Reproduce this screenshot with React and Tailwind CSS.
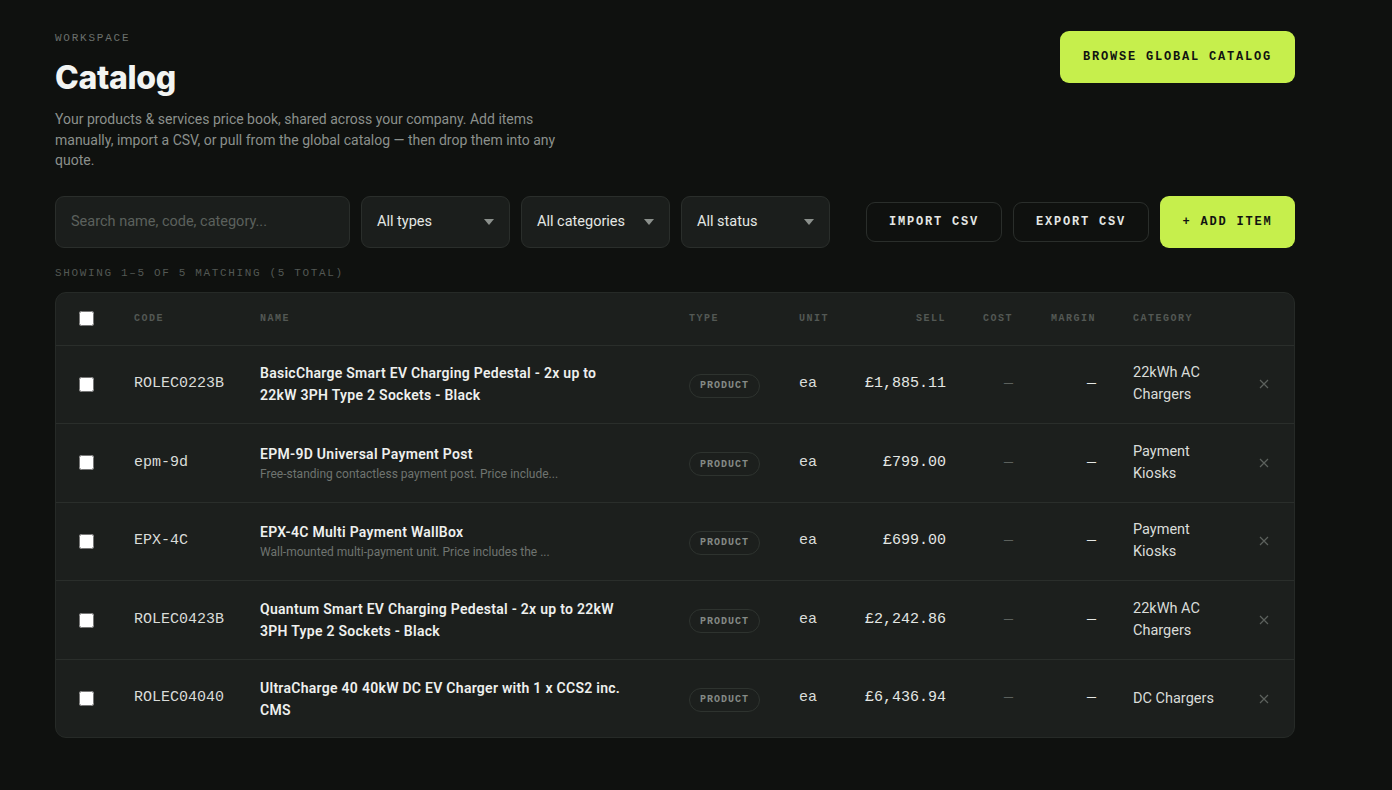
import { useState } from 'react';

const SANS = "font-['Roboto','Noto_Sans',sans-serif]";
const MONO = "font-['Liberation_Mono','DejaVu_Sans_Mono',monospace]";

const items = [
  {
    code: 'ROLEC0223B',
    name: 'BasicCharge Smart EV Charging Pedestal - 2x up to 22kW 3PH Type 2 Sockets - Black',
    sell: '£1,885.11',
    category: '22kWh AC Chargers',
  },
  {
    code: 'epm-9d',
    name: 'EPM-9D Universal Payment Post',
    desc: 'Free-standing contactless payment post. Price include...',
    sell: '£799.00',
    category: 'Payment Kiosks',
  },
  {
    code: 'EPX-4C',
    name: 'EPX-4C Multi Payment WallBox',
    desc: 'Wall-mounted multi-payment unit. Price includes the ...',
    sell: '£699.00',
    category: 'Payment Kiosks',
  },
  {
    code: 'ROLEC0423B',
    name: 'Quantum Smart EV Charging Pedestal - 2x up to 22kW 3PH Type 2 Sockets - Black',
    sell: '£2,242.86',
    category: '22kWh AC Chargers',
  },
  {
    code: 'ROLEC04040',
    name: 'UltraCharge 40 40kW DC EV Charger with 1 x CCS2 inc. CMS',
    sell: '£6,436.94',
    category: 'DC Chargers',
  },
];

const GRID =
  'grid grid-cols-[78px_126px_429px_110px_57px_90px_67px_83px_147px_53px] items-center';

const Caret = () => (
  <svg width="10" height="6" viewBox="0 0 10 6" className="shrink-0">
    <path d="M0 0h10L5 6z" fill="#8b908c" />
  </svg>
);

const Select = ({ label }) => (
  <div className="w-[149px] h-[52px] flex items-center justify-between px-[15px] rounded-[9px] border border-[#2a2e2b] bg-[#1b1e1c] text-[14.5px] text-[#e4e7e4] cursor-pointer">
    <span>{label}</span>
    <Caret />
  </div>
);

const Checkbox = () => (
  <input type="checkbox" className="w-[15px] h-[15px] m-0 block" />
);

const Header = ({ children, className = '' }) => (
  <div
    className={`${MONO} text-[10px] font-bold tracking-[0.15em] text-[#535854] uppercase ${className}`}
  >
    {children}
  </div>
);

export default function App() {
  const [query, setQuery] = useState('');

  return (
    <div className={`${SANS} min-h-[790px] bg-[#0f110f] text-[#eef0ee] pl-[55px] pt-[30px] pb-[52px]`}>
      <div className="w-[1240px]">
        {/* Title */}
        <div className="flex justify-between items-start">
          <div>
            <div className={`${MONO} text-[11px] leading-[16px] tracking-[0.16em] text-[#6b706c]`}>
              WORKSPACE
            </div>
            <h1 className="mt-[12px] text-[32px] leading-[40px] font-extrabold tracking-[-0.01em] font-['Inter',sans-serif] text-[#f2f4f2]">
              Catalog
            </h1>
            <p className="mt-[11px] w-[520px] text-[14px] leading-[20.5px] text-[#8b908c]">
              Your products &amp; services price book, shared across your company. Add items
              manually, import a CSV, or pull from the global catalog — then drop them into any
              quote.
            </p>
          </div>
          <button
            className={`${MONO} mt-[1px] w-[235px] h-[52px] rounded-[9px] bg-[#c6ef4c] text-[#111311] text-[12px] font-bold tracking-[0.15em]`}
          >
            BROWSE GLOBAL CATALOG
          </button>
        </div>

        {/* Filters */}
        <div className="mt-[25px] flex items-center">
          <div className="flex gap-[11px]">
            <input
              value={query}
              onChange={(e) => setQuery(e.target.value)}
              placeholder="Search name, code, category..."
              className="w-[295px] h-[52px] px-[15px] rounded-[9px] border border-[#2a2e2b] bg-[#1b1e1c] text-[14.5px] text-[#e4e7e4] placeholder:text-[#5c615d] outline-none"
            />
            <Select label="All types" />
            <Select label="All categories" />
            <Select label="All status" />
          </div>
          <div className="ml-auto flex items-center gap-[11px]">
            <button
              className={`${MONO} w-[136px] h-[40px] rounded-[9px] border border-[#2a2e2b] text-[12px] font-bold tracking-[0.15em] text-[#e4e7e4]`}
            >
              IMPORT CSV
            </button>
            <button
              className={`${MONO} w-[136px] h-[40px] rounded-[9px] border border-[#2a2e2b] text-[12px] font-bold tracking-[0.15em] text-[#e4e7e4]`}
            >
              EXPORT CSV
            </button>
            <button
              className={`${MONO} w-[135px] h-[52px] rounded-[9px] bg-[#c6ef4c] text-[#111311] text-[12px] font-bold tracking-[0.15em]`}
            >
              + ADD ITEM
            </button>
          </div>
        </div>

        <div className={`${MONO} mt-[17px] text-[11px] leading-[16px] tracking-[0.15em] text-[#535854]`}>
          SHOWING 1–5 OF 5 MATCHING (5 TOTAL)
        </div>

        {/* Table */}
        <div className="mt-[11px] rounded-[11px] border border-[#262a27] bg-[#1c1f1d] overflow-hidden">
          <div className={`${GRID} h-[53px] border-b border-[#2a2e2b]`}>
            <div className="pl-[23px]">
              <Checkbox />
            </div>
            <Header>Code</Header>
            <Header>Name</Header>
            <Header>Type</Header>
            <Header>Unit</Header>
            <Header className="text-right">Sell</Header>
            <Header className="text-right">Cost</Header>
            <Header className="text-right">Margin</Header>
            <Header className="pl-[37px]">Category</Header>
            <div />
          </div>

          {items.map((item, i) => (
            <div
              key={item.code}
              className={`${GRID} py-[16.8px] ${i < items.length - 1 ? 'border-b border-[#2a2e2b]' : ''}`}
            >
              <div className="pl-[23px]">
                <Checkbox />
              </div>
              <div className={`${MONO} text-[15px] text-[#d9dcd9]`}>{item.code}</div>
              <div className="pr-[59px]">
                <div className="text-[14px] leading-[22px] font-semibold tracking-[0.02em] text-[#eef0ee]">
                  {item.name}
                </div>
                {item.desc && (
                  <div className="text-[12px] leading-[18px] text-[#6f7470] truncate">
                    {item.desc}
                  </div>
                )}
              </div>
              <div>
                <span
                  className={`${MONO} inline-flex items-center h-[24px] px-[10px] rounded-full border border-[#2e332f] text-[10px] font-bold tracking-[0.1em] text-[#858a86]`}
                >
                  PRODUCT
                </span>
              </div>
              <div className={`${MONO} text-[15px] text-[#d9dcd9]`}>ea</div>
              <div className={`${MONO} text-[15px] text-right text-[#e4e7e4]`}>{item.sell}</div>
              <div className={`${MONO} text-[15px] text-right text-[#5c615d]`}>—</div>
              <div className={`${MONO} text-[15px] text-right text-[#e4e7e4]`}>—</div>
              <div className="pl-[37px] text-[14.5px] leading-[22px] text-[#d9dcd9] pr-[22px]">
                {item.category}
              </div>
              <div className="pl-[16px]">
                <svg width="10" height="10" viewBox="0 0 10 10" className="block">
                  <path d="M1 1l8 8M9 1l-8 8" stroke="#5c615d" strokeWidth="1.2" />
                </svg>
              </div>
            </div>
          ))}
        </div>
      </div>
    </div>
  );
}
